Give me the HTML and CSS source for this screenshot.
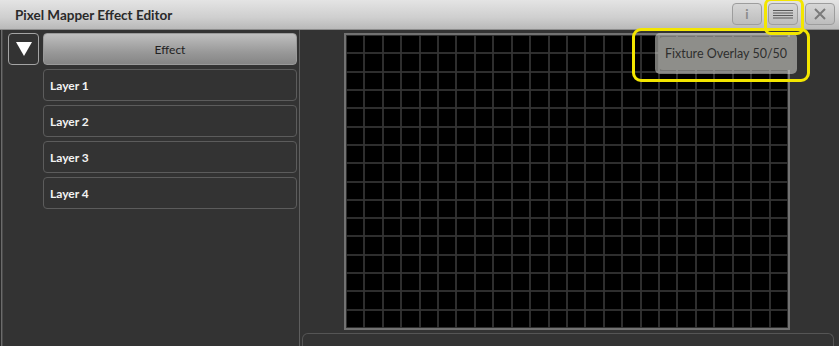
FILE: index.html
```html
<!doctype html>
<html lang="en">
<head>
	<meta charset="UTF-8">
	<title>Pixel Mapper Effect Editor</title>
	<link rel="stylesheet" href="styles.css">
</head>
<body>
	<div class="window">
		<div class="titlebar">
			<span class="title">Pixel Mapper Effect Editor</span>
			<div class="tools">
				<button class="tool">i</button>
				<button class="tool">
					<svg width="22" height="10" viewBox="0 0 22 10">
						<path d="M1 1.5H21M1 4H21M1 6.5H21M1 9H21" stroke="#5a5a5a" stroke-width="1.2"/>
					</svg>
				</button>
				<button class="tool">
					<svg width="14" height="14" viewBox="0 0 14 14">
						<path d="M2 2L12 12M12 2L2 12" stroke="#7a7a7a" stroke-width="2"/>
					</svg>
				</button>
			</div>
		</div>
		<div class="main">
			<div class="sidebar">
				<button class="drop">
					<svg width="16" height="14" viewBox="0 0 16 14"><path d="M0 0H16L8 14Z" fill="#fff"/></svg>
				</button>
				<button class="effect">Effect</button>
				<button class="layer">Layer 1</button>
				<button class="layer">Layer 2</button>
				<button class="layer">Layer 3</button>
				<button class="layer">Layer 4</button>
			</div>
			<div class="stage">
				<div class="frame">
					<div class="grid" id="grid"></div>
				</div>
				<div class="footer"></div>
				<div class="overlay"><span>Fixture Overlay 50/50</span></div>
			</div>
		</div>
		<div class="mark mark-menu"></div>
		<div class="mark mark-overlay"></div>
	</div>
	<script>
		var grid = document.getElementById('grid');
		for(var i=0;i<24*16;i++){
			var c = document.createElement('div');
			c.className = 'cell';
			grid.appendChild(c);
		}
	</script>
</body>
</html>
```

FILE: styles.css
```css
body{
	margin: 0;
	background: #333;
	font-family: Lato, "Open Sans", sans-serif;
}
.window{
	width: 839px;
	height: 346px;
	position: relative;
	display: flex;
	flex-direction: column;
	overflow: hidden;
}
.titlebar{
	height: 30px;
	flex: none;
	display: flex;
	align-items: center;
	justify-content: space-between;
	background: linear-gradient(#e4e4e4, #cfcfcf 60%, #b9b9b9);
	border-bottom: 1px solid #8c8c8c;
	box-sizing: border-box;
}
.title{
	margin-left: 15px;
	font-size: 13.5px;
	font-weight: bold;
	color: #2a2a2a;
}
.tools{
	display: flex;
	gap: 7px;
	margin-right: 4px;
	margin-top: -1px;
}
.tool{
	width: 30px;
	height: 22px;
	padding: 0;
	display: flex;
	align-items: center;
	justify-content: center;
	border: 1px solid #9d9d9d;
	border-radius: 4px;
	background: linear-gradient(#d6d6d6, #bdbdbd);
	color: #8a8a8a;
	font-family: Lato, sans-serif;
	font-size: 13px;
	font-weight: bold;
}
.tool:first-child{
	margin-right: -1px;
}
.main{
	flex: 1;
	display: flex;
	box-shadow: inset 1px 0 #2a2a2a, inset 2px 0 #6b6b6b, inset 3px 0 #4a4a4a;
}
.sidebar{
	width: 300px;
	flex: none;
	border-right: 1px solid #5e5e5e;
	display: grid;
	grid-template-columns: 31px 254px;
	grid-auto-rows: 32px;
	gap: 4px;
	padding: 3px 0 0 8px;
	box-sizing: border-box;
	align-content: start;
}
.sidebar button{
	font-family: Lato, sans-serif;
	font-size: 12px;
	border-radius: 4px;
	padding: 0;
}
.drop{
	border: 1px solid #a4a4a4;
	background: #333;
	display: flex;
	align-items: center;
	justify-content: center;
}
.effect{
	border: 1px solid #9a9a9a;
	background: linear-gradient(#bfbfbf, #999 60%, #858585);
	color: #222;
}
.layer{
	grid-column: 2;
	border: 1px solid #5c5c5c;
	background: #333;
	color: #f2f2f2;
	font-weight: bold;
	text-align: left;
	padding-left: 6px !important;
}
.stage{
	flex: 1;
	position: relative;
	padding: 3px 0 0 44px;
}
.frame{
	width: 442px;
	height: 293px;
	border: 2px solid #727272;
	background: #2c2c2c;
}
.grid{
	display: grid;
	grid-template-columns: repeat(24, 1fr);
	grid-template-rows: repeat(16, 1fr);
	gap: 2px;
	padding: 1px;
	height: 100%;
	box-sizing: border-box;
	background: #3a3a3a;
}
.cell{
	background: #000;
	box-shadow: 0 0 0 0.5px #222;
}
.footer{
	margin: 3px 5px 0 -42px;
	height: 20px;
	border: 1px solid #555;
	border-bottom: none;
	border-radius: 6px 6px 0 0;
	background: #333;
}
.overlay{
	position: absolute;
	left: 355px;
	top: 3px;
	width: 142px;
	height: 41px;
	box-sizing: border-box;
	padding: 4px;
	border-radius: 5px;
	background: rgba(215, 215, 210, 0.55);
}
.overlay span{
	display: flex;
	height: 100%;
	align-items: center;
	justify-content: center;
	border-radius: 4px;
	background: #8e8e8a;
	color: #2e2e2e;
	font-size: 12.5px;
}
.mark{
	position: absolute;
	border: 3px solid #f3e600;
	box-sizing: border-box;
}
.mark-menu{
	left: 764px;
	top: -2px;
	width: 40px;
	height: 37px;
	border-radius: 7px;
}
.mark-overlay{
	left: 632px;
	top: 28px;
	width: 178px;
	height: 54px;
	border-radius: 9px;
}
```
